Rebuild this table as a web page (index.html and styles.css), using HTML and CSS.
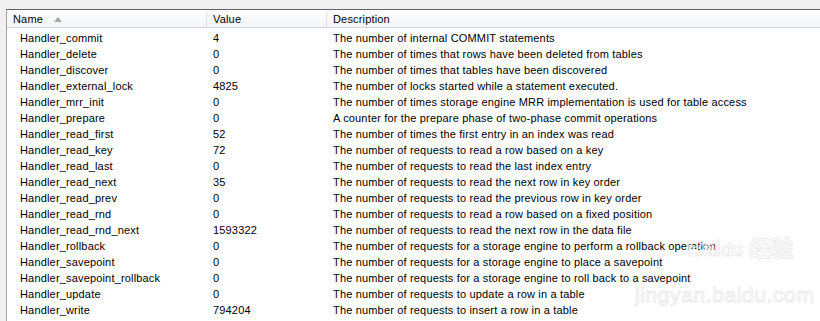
FILE: index.html
```html
<!DOCTYPE html>
<html lang="en">
<head>
    <meta charset="UTF-8">
    <title>Status Variables</title>
    <link rel="stylesheet" href="styles.css">
</head>
<body>
    <div class="frame">
        <div class="list">
            <div class="list-head">
                <div class="col col-name">Name <span class="sort-arrow"></span></div>
                <div class="col col-value">Value</div>
                <div class="col col-desc">Description</div>
            </div>
            <div class="rows">
                <div class="row"><span class="cell name">Handler_commit</span><span class="cell value">4</span><span class="cell desc">The number of internal COMMIT statements</span></div>
                <div class="row"><span class="cell name">Handler_delete</span><span class="cell value">0</span><span class="cell desc">The number of times that rows have been deleted from tables</span></div>
                <div class="row"><span class="cell name">Handler_discover</span><span class="cell value">0</span><span class="cell desc">The number of times that tables have been discovered</span></div>
                <div class="row"><span class="cell name">Handler_external_lock</span><span class="cell value">4825</span><span class="cell desc">The number of locks started while a statement executed.</span></div>
                <div class="row"><span class="cell name">Handler_mrr_init</span><span class="cell value">0</span><span class="cell desc">The number of times storage engine MRR implementation is used for table access</span></div>
                <div class="row"><span class="cell name">Handler_prepare</span><span class="cell value">0</span><span class="cell desc">A counter for the prepare phase of two-phase commit operations</span></div>
                <div class="row"><span class="cell name">Handler_read_first</span><span class="cell value">52</span><span class="cell desc">The number of times the first entry in an index was read</span></div>
                <div class="row"><span class="cell name">Handler_read_key</span><span class="cell value">72</span><span class="cell desc">The number of requests to read a row based on a key</span></div>
                <div class="row"><span class="cell name">Handler_read_last</span><span class="cell value">0</span><span class="cell desc">The number of requests to read the last index entry</span></div>
                <div class="row"><span class="cell name">Handler_read_next</span><span class="cell value">35</span><span class="cell desc">The number of requests to read the next row in key order</span></div>
                <div class="row"><span class="cell name">Handler_read_prev</span><span class="cell value">0</span><span class="cell desc">The number of requests to read the previous row in key order</span></div>
                <div class="row"><span class="cell name">Handler_read_rnd</span><span class="cell value">0</span><span class="cell desc">The number of requests to read a row based on a fixed position</span></div>
                <div class="row"><span class="cell name">Handler_read_rnd_next</span><span class="cell value">1593322</span><span class="cell desc">The number of requests to read the next row in the data file</span></div>
                <div class="row"><span class="cell name">Handler_rollback</span><span class="cell value">0</span><span class="cell desc">The number of requests for a storage engine to perform a rollback operation</span></div>
                <div class="row"><span class="cell name">Handler_savepoint</span><span class="cell value">0</span><span class="cell desc">The number of requests for a storage engine to place a savepoint</span></div>
                <div class="row"><span class="cell name">Handler_savepoint_rollback</span><span class="cell value">0</span><span class="cell desc">The number of requests for a storage engine to roll back to a savepoint</span></div>
                <div class="row"><span class="cell name">Handler_update</span><span class="cell value">0</span><span class="cell desc">The number of requests to update a row in a table</span></div>
                <div class="row"><span class="cell name">Handler_write</span><span class="cell value">794204</span><span class="cell desc">The number of requests to insert a row in a table</span></div>
            </div>
            <div class="watermark">
                <span class="wm-logo">Bai<span class="wm-du">du</span> 经验</span>
                <span class="wm-url">jingyan.baidu.com</span>
            </div>
        </div>
    </div>
</body>
</html>
```

FILE: styles.css
```css
* {
    box-sizing: border-box;
    margin: 0;
    padding: 0;
}

body {
    font-family: 'Liberation Sans', Arial, sans-serif;
    font-size: 11px;
    letter-spacing: 0.17px;
    color: #000000;
    background-color: #f0f0f0;
    overflow: hidden;
}

.frame {
    padding: 9px 0 0 6px;
    height: 321px;
}

.list {
    position: relative;
    height: 100%;
    background-color: #ffffff;
    border-top: 1px solid #646464;
    border-left: 1px solid #a0a0a0;
}

.list-head {
    display: flex;
    height: 18px;
    padding-top: 1px;
    background: linear-gradient(#ffffff, #f3f4f6);
    border-bottom: 1px solid #d5d5d5;
}

.col {
    display: flex;
    align-items: center;
    padding-left: 6px;
    border-right: 1px solid #dde0e4;
}

.col-name {
    width: 200px;
}

.col-value {
    width: 120px;
}

.col-desc {
    flex: 1;
    border-right: none;
}

.sort-arrow {
    display: inline-block;
    margin-left: 11px;
    width: 0;
    height: 0;
    border-left: 4px solid transparent;
    border-right: 4px solid transparent;
    border-bottom: 5px solid #a7a7a7;
}

.rows {
    padding-top: 2px;
}

.row {
    display: flex;
    height: 16px;
    align-items: center;
    white-space: nowrap;
}

.cell {
    display: block;
}

.name {
    width: 200px;
    padding-left: 13px;
}

.value {
    width: 120px;
    padding-left: 6px;
}

.desc {
    padding-left: 6px;
}

.watermark {
    position: absolute;
    left: 620px;
    top: 222px;
    display: flex;
    flex-direction: column;
    align-items: flex-start;
    color: transparent;
    letter-spacing: 0;
    -webkit-text-stroke: 1px #ececec;
    pointer-events: none;
}

.wm-logo {
    font-family: 'Liberation Sans', 'Noto Sans CJK SC', sans-serif;
    font-weight: bold;
    font-size: 22px;
    line-height: 34px;
    padding-left: 60px;
}

.wm-du {
    font-size: 18px;
}

.wm-url {
    font-family: 'Liberation Sans', Arial, sans-serif;
    font-size: 21px;
    letter-spacing: 0.6px;
    line-height: 24px;
    margin-top: 16px;
    padding-left: 8px;
}
```
